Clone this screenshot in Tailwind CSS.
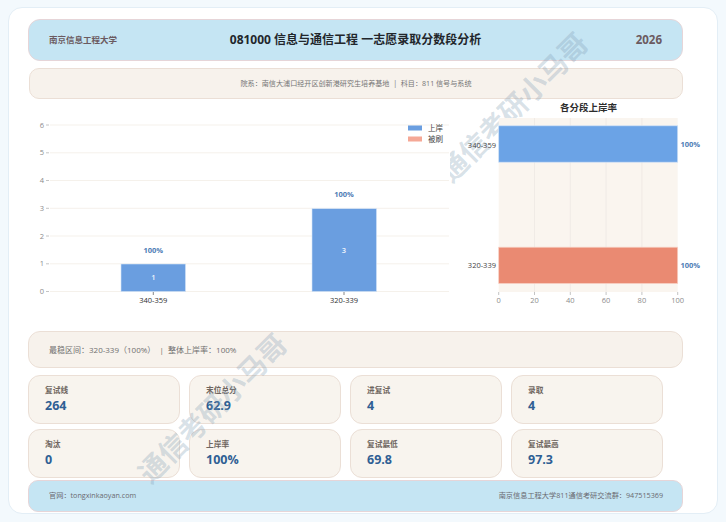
<!DOCTYPE html>
<html lang="zh-CN">
<head>
  <meta charset="UTF-8">
  <title>一志愿录取分数段分析</title>
  <script src="https://cdn.jsdelivr.net/npm/@tailwindcss/browser@4"></script>
</head>
<body class="w-[726px] h-[522px] overflow-hidden bg-[#f3f9fd] font-['Open_Sans','Noto_Sans_CJK_SC',sans-serif]">
  <div class="relative overflow-hidden ml-2 mt-[7px] w-[710px] h-[507px] bg-white rounded-[14px] border border-[#e3eef6] pl-[19px] pr-[34px] pt-[11px]">

    <!-- header -->
    <div class="flex items-center justify-between h-[42px] px-5 bg-[#c5e5f3] border border-[#e6d5d8] rounded-[12px]">
      <span class="w-[140px] text-[8.5px] font-bold text-[#6b5a60]">南京信息工程大学</span>
      <span class="text-[12px] font-bold text-[#22262b] font-['Noto_Sans','Noto_Sans_CJK_SC',sans-serif]">081000 信息与通信工程 一志愿录取分数段分析</span>
      <span class="w-[140px] text-right text-[11.5px] font-bold text-[#6b5a60]">2026</span>
    </div>
    <div class="flex items-center justify-center h-[31px] mt-[7px] ml-px bg-[#f7f2ec] border border-[#ebdfd6] rounded-[10px] text-[7.1px] text-[#757575]">
      院系：南信大浦口经开区创新港研究生培养基地 &nbsp;|&nbsp; 科目：811 信号与系统
    </div>

    <!-- charts -->
    <div class="relative z-10 flex h-[232px] -ml-[9px]">
      <svg class="w-[431px] h-[232px] shrink-0 bg-white" viewBox="19 99 431 232" font-family="'Open Sans','Noto Sans CJK SC',sans-serif">
        <g stroke="#f5f1eb" stroke-width="1">
          <line x1="50" x2="449" y1="125" y2="125"/>
          <line x1="50" x2="449" y1="152.8" y2="152.8"/>
          <line x1="50" x2="449" y1="180.5" y2="180.5"/>
          <line x1="50" x2="449" y1="208.3" y2="208.3"/>
          <line x1="50" x2="449" y1="236" y2="236"/>
          <line x1="50" x2="449" y1="263.8" y2="263.8"/>
          <line x1="50" x2="449" y1="291.5" y2="291.5"/>
        </g>
        <g stroke="#b5b5b5" stroke-width="0.8">
          <line x1="46" x2="49" y1="125" y2="125"/>
          <line x1="46" x2="49" y1="152.8" y2="152.8"/>
          <line x1="46" x2="49" y1="180.5" y2="180.5"/>
          <line x1="46" x2="49" y1="208.3" y2="208.3"/>
          <line x1="46" x2="49" y1="236" y2="236"/>
          <line x1="46" x2="49" y1="263.8" y2="263.8"/>
          <line x1="46" x2="49" y1="291.5" y2="291.5"/>
        </g>
        <g font-size="7.5" fill="#8c8c8c" text-anchor="end">
          <text x="44" y="127.5">6</text>
          <text x="44" y="155.3">5</text>
          <text x="44" y="183">4</text>
          <text x="44" y="210.8">3</text>
          <text x="44" y="238.5">2</text>
          <text x="44" y="266.3">1</text>
          <text x="44" y="294">0</text>
        </g>
        <rect x="121" y="264" width="64.5" height="27.5" fill="#6a9ee0" stroke="#d3e3f7" stroke-width="0.6"/>
        <rect x="312" y="208.7" width="64.5" height="82.8" fill="#6a9ee0" stroke="#d3e3f7" stroke-width="0.6"/>
        <g stroke="#555" stroke-width="0.7">
          <line x1="153.3" x2="153.3" y1="292" y2="295"/>
          <line x1="344" x2="344" y1="292" y2="295"/>
        </g>
        <g font-size="7.5" fill="#2f2f2f" text-anchor="middle">
          <text x="153.3" y="303">340-359</text>
          <text x="344" y="303">320-339</text>
        </g>
        <g font-size="7.5" font-weight="700" fill="#4e7cb5" text-anchor="middle">
          <text x="153.3" y="252.5">100%</text>
          <text x="344" y="197">100%</text>
        </g>
        <g font-size="7.5" font-weight="600" fill="#eef4fc" text-anchor="middle">
          <text x="153.3" y="279.5">1</text>
          <text x="344" y="252.5">3</text>
        </g>
        <rect x="408" y="125.5" width="14" height="5" fill="#6a9ee0"/>
        <rect x="408" y="136.5" width="14" height="5" fill="#f5a896"/>
        <g font-size="7.5" fill="#3f3f3f">
          <text x="428" y="130.5">上岸</text>
          <text x="428" y="141.5">被刷</text>
        </g>
      </svg>
      <svg class="w-[252px] h-[232px] shrink-0" viewBox="450 99 252 232" font-family="'Open Sans','Noto Sans CJK SC',sans-serif">
        <text x="588.5" y="110.5" font-size="9.5" font-weight="700" fill="#2c2c2c" text-anchor="middle">各分段上岸率</text>
        <rect x="498.7" y="118" width="179" height="174" fill="#faf5ef"/>
        <g stroke="#eeeae4" stroke-width="0.9">
          <line x1="534.5" x2="534.5" y1="118" y2="292"/>
          <line x1="570.3" x2="570.3" y1="118" y2="292"/>
          <line x1="606.1" x2="606.1" y1="118" y2="292"/>
          <line x1="641.9" x2="641.9" y1="118" y2="292"/>
        </g>
        <rect x="498.7" y="125.8" width="179" height="36.4" fill="#6ba3e6" stroke="#cfe1f6" stroke-width="0.7"/>
        <rect x="498.7" y="247.2" width="179" height="36.3" fill="#ea8a72" stroke="#f8d2c6" stroke-width="0.7"/>
        <g font-size="7.5" fill="#444" text-anchor="end">
          <text x="496" y="147.5">340-359</text>
          <text x="496" y="268">320-339</text>
        </g>
        <g font-size="7.5" font-weight="700" fill="#4e7cb5">
          <text x="680.5" y="146.5">100%</text>
          <text x="680.5" y="268">100%</text>
        </g>
        <g stroke="#aaa" stroke-width="0.7">
          <line x1="498.7" x2="498.7" y1="292" y2="295"/>
          <line x1="534.5" x2="534.5" y1="292" y2="295"/>
          <line x1="570.3" x2="570.3" y1="292" y2="295"/>
          <line x1="606.1" x2="606.1" y1="292" y2="295"/>
          <line x1="641.9" x2="641.9" y1="292" y2="295"/>
          <line x1="677.7" x2="677.7" y1="292" y2="295"/>
        </g>
        <g font-size="7.5" fill="#8c8c8c" text-anchor="middle">
          <text x="498.7" y="302.5">0</text>
          <text x="534.5" y="302.5">20</text>
          <text x="570.3" y="302.5">40</text>
          <text x="606.1" y="302.5">60</text>
          <text x="641.9" y="302.5">80</text>
          <text x="677.7" y="302.5">100</text>
        </g>
      </svg>
    </div>

    <!-- summary -->
    <div class="flex items-center h-[37px] px-5 bg-[#f7f2ec] border border-[#ebdfd6] rounded-[12px] text-[8px] text-[#6f6f6f]">
      最稳区间：320-339（100%） &nbsp;|&nbsp; 整体上岸率：100%
    </div>

    <!-- stats -->
    <div class="grid grid-cols-[repeat(4,151.5px)] gap-x-[9.5px] gap-y-[4.5px] mt-[7px]">
      <div class="h-[49px] px-4 pt-[8px] bg-[#f8f4ee] border border-[#ebdfd6] rounded-[12px]">
        <div class="text-[7.7px] leading-[13px] font-semibold text-[#6f6660]">复试线</div>
        <div class="text-[12.5px] leading-[18px] font-bold text-[#2f5f94]">264</div>
      </div>
      <div class="h-[49px] px-4 pt-[8px] bg-[#f8f4ee] border border-[#ebdfd6] rounded-[12px]">
        <div class="text-[7.7px] leading-[13px] font-semibold text-[#6f6660]">末位总分</div>
        <div class="text-[12.5px] leading-[18px] font-bold text-[#2f5f94]">62.9</div>
      </div>
      <div class="h-[49px] px-4 pt-[8px] bg-[#f8f4ee] border border-[#ebdfd6] rounded-[12px]">
        <div class="text-[7.7px] leading-[13px] font-semibold text-[#6f6660]">进复试</div>
        <div class="text-[12.5px] leading-[18px] font-bold text-[#2f5f94]">4</div>
      </div>
      <div class="h-[49px] px-4 pt-[8px] bg-[#f8f4ee] border border-[#ebdfd6] rounded-[12px]">
        <div class="text-[7.7px] leading-[13px] font-semibold text-[#6f6660]">录取</div>
        <div class="text-[12.5px] leading-[18px] font-bold text-[#2f5f94]">4</div>
      </div>
      <div class="h-[49px] px-4 pt-[8px] bg-[#f8f4ee] border border-[#ebdfd6] rounded-[12px]">
        <div class="text-[7.7px] leading-[13px] font-semibold text-[#6f6660]">淘汰</div>
        <div class="text-[12.5px] leading-[18px] font-bold text-[#2f5f94]">0</div>
      </div>
      <div class="h-[49px] px-4 pt-[8px] bg-[#f8f4ee] border border-[#ebdfd6] rounded-[12px]">
        <div class="text-[7.7px] leading-[13px] font-semibold text-[#6f6660]">上岸率</div>
        <div class="text-[12.5px] leading-[18px] font-bold text-[#2f5f94]">100%</div>
      </div>
      <div class="h-[49px] px-4 pt-[8px] bg-[#f8f4ee] border border-[#ebdfd6] rounded-[12px]">
        <div class="text-[7.7px] leading-[13px] font-semibold text-[#6f6660]">复试最低</div>
        <div class="text-[12.5px] leading-[18px] font-bold text-[#2f5f94]">69.8</div>
      </div>
      <div class="h-[49px] px-4 pt-[8px] bg-[#f8f4ee] border border-[#ebdfd6] rounded-[12px]">
        <div class="text-[7.7px] leading-[13px] font-semibold text-[#6f6660]">复试最高</div>
        <div class="text-[12.5px] leading-[18px] font-bold text-[#2f5f94]">97.3</div>
      </div>
    </div>

    <!-- footer -->
    <div class="flex items-center justify-between h-[32px] mt-[2px] pl-5 pr-[19px] bg-[#c5e5f3] border border-[#e6d5d8] rounded-[10px] text-[7.2px] text-[#6a6a70]">
      <span>官网：tongxinkaoyan.com</span>
      <span>南京信息工程大学811通信考研交流群：947515369</span>
    </div>

    <!-- watermark -->
    <div class="absolute left-[404px] top-[84px] w-[200px] text-center text-[28px] leading-[30px] font-bold whitespace-nowrap text-[#7b98b0]/30 -rotate-45 pointer-events-none">通信考研小马哥</div>
    <div class="absolute left-[103px] top-[385px] w-[200px] text-center text-[28px] leading-[30px] font-bold whitespace-nowrap text-[#7b98b0]/30 -rotate-45 pointer-events-none">通信考研小马哥</div>
  </div>
</body>
</html>
